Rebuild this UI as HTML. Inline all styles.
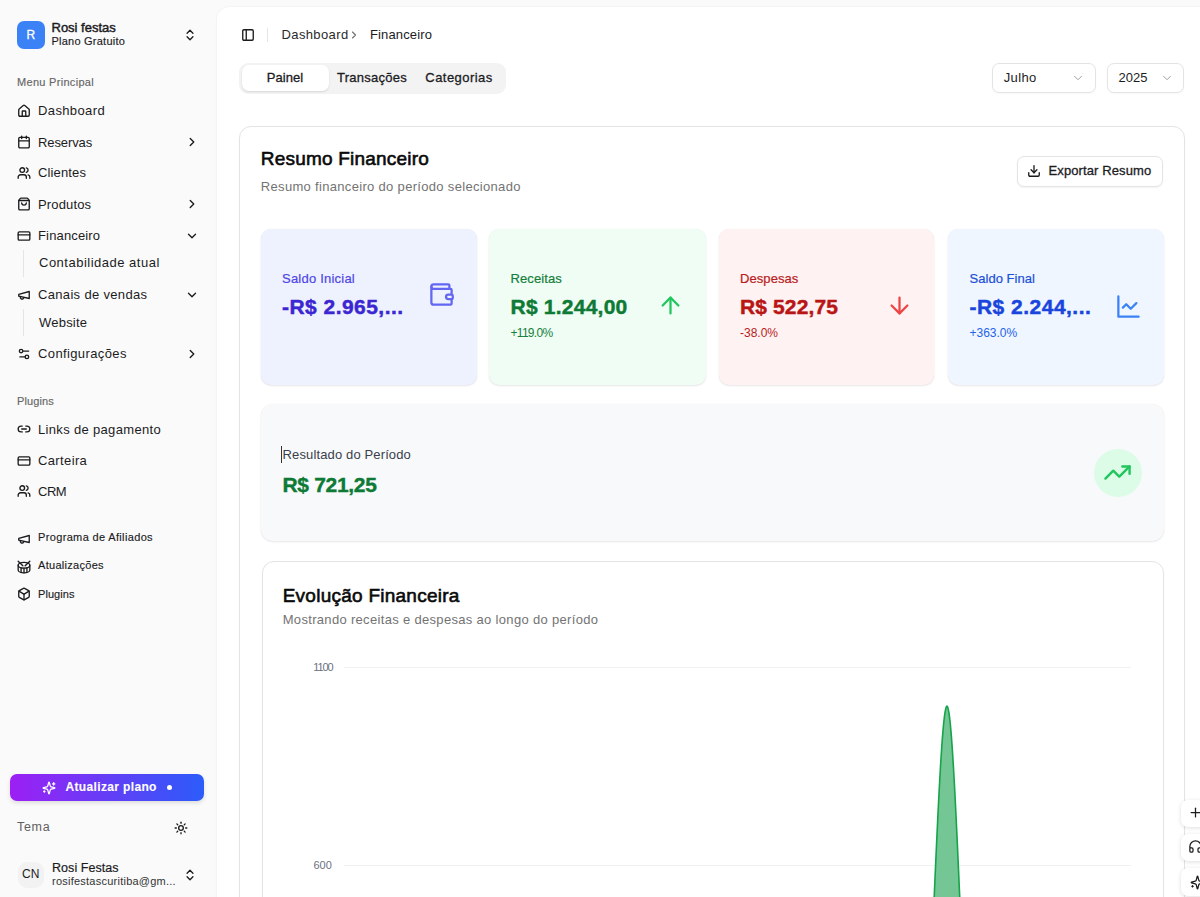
<!DOCTYPE html>
<html><head><meta charset="utf-8"><title>Financeiro</title>
<style>
html,body{margin:0;padding:0;width:1200px;height:897px;overflow:hidden;background:#fafafa;font-family:"Liberation Sans", sans-serif;}
.t{position:absolute;white-space:nowrap;line-height:1;}
.b{position:absolute;}
.i{position:absolute;overflow:visible;}
</style></head><body>
<div class="b" style="left:17px;top:21px;width:28px;height:28px;background:#3b82f6;border-radius:7px"></div>
<div class="t" style="left:26.5px;top:29.34px;font-size:12px;color:#fff;font-weight:400;letter-spacing:0px;-webkit-text-stroke:0.3px #fff;">R</div>
<div class="t" style="left:51.5px;top:21.20px;font-size:13px;color:#1c1c1e;font-weight:400;letter-spacing:0.0px;-webkit-text-stroke:0.45px #1c1c1e;">Rosi festas</div>
<div class="t" style="left:51.5px;top:35.89px;font-size:11px;color:#1c1c1e;font-weight:400;letter-spacing:0.23px;-webkit-text-stroke:0.15px #1c1c1e;">Plano Gratuito</div>
<svg class="i" style="left:183px;top:27.9px;" width="14" height="14" viewBox="0 0 24 24" fill="none" stroke="#1c1c1e" stroke-width="2.3" stroke-linecap="round" stroke-linejoin="round"><path d="m7 15 5 5 5-5"/><path d="m7 9 5-5 5 5"/></svg>
<div class="t" style="left:17.0px;top:76.99px;font-size:11px;color:#666666;font-weight:400;letter-spacing:0.3px;-webkit-text-stroke:0.15px #666666;">Menu Principal</div>
<svg class="i" style="left:17.2px;top:103.7px;" width="14" height="14" viewBox="0 0 24 24" fill="none" stroke="#1c1c1e" stroke-width="2.3" stroke-linecap="round" stroke-linejoin="round"><path d="M15 21v-8a1 1 0 0 0-1-1h-4a1 1 0 0 0-1 1v8"/><path d="M3 10a2 2 0 0 1 .709-1.528l7-5.999a2 2 0 0 1 2.582 0l7 5.999A2 2 0 0 1 21 10v9a2 2 0 0 1-2 2H5a2 2 0 0 1-2-2z"/></svg>
<div class="t" style="left:38.0px;top:104.20px;font-size:13px;color:#1c1c1e;font-weight:400;letter-spacing:0.38px;">Dashboard</div>
<svg class="i" style="left:17.2px;top:135.1px;" width="14" height="14" viewBox="0 0 24 24" fill="none" stroke="#1c1c1e" stroke-width="2.3" stroke-linecap="round" stroke-linejoin="round"><path d="M8 2v4"/><path d="M16 2v4"/><rect width="18" height="18" x="3" y="4" rx="2"/><path d="M3 10h18"/></svg>
<div class="t" style="left:38.0px;top:135.60px;font-size:13px;color:#1c1c1e;font-weight:400;letter-spacing:-0.1px;">Reservas</div>
<svg class="i" style="left:184.8px;top:134.9px;" width="14" height="14" viewBox="0 0 24 24" fill="none" stroke="#1c1c1e" stroke-width="2.3" stroke-linecap="round" stroke-linejoin="round"><path d="m9 18 6-6-6-6"/></svg>
<svg class="i" style="left:17.2px;top:165.5px;" width="14" height="14" viewBox="0 0 24 24" fill="none" stroke="#1c1c1e" stroke-width="2.3" stroke-linecap="round" stroke-linejoin="round"><path d="M16 21v-2a4 4 0 0 0-4-4H6a4 4 0 0 0-4 4v2"/><circle cx="9" cy="7" r="4"/><path d="M22 21v-2a4 4 0 0 0-3-3.87"/><path d="M16 3.13a4 4 0 0 1 0 7.75"/></svg>
<div class="t" style="left:38.0px;top:166.00px;font-size:13px;color:#1c1c1e;font-weight:400;letter-spacing:0.14px;">Clientes</div>
<svg class="i" style="left:17.2px;top:197.2px;" width="14" height="14" viewBox="0 0 24 24" fill="none" stroke="#1c1c1e" stroke-width="2.3" stroke-linecap="round" stroke-linejoin="round"><path d="M16 10a4 4 0 0 1-8 0"/><path d="M3.103 6.034h17.794"/><path d="M3.4 5.467a2 2 0 0 0-.4 1.2V20a2 2 0 0 0 2 2h14a2 2 0 0 0 2-2V6.667a2 2 0 0 0-.4-1.2l-2-2.667A2 2 0 0 0 17 2H7a2 2 0 0 0-1.6.8z"/></svg>
<div class="t" style="left:38.0px;top:197.70px;font-size:13px;color:#1c1c1e;font-weight:400;letter-spacing:0.15px;">Produtos</div>
<svg class="i" style="left:184.8px;top:197.0px;" width="14" height="14" viewBox="0 0 24 24" fill="none" stroke="#1c1c1e" stroke-width="2.3" stroke-linecap="round" stroke-linejoin="round"><path d="m9 18 6-6-6-6"/></svg>
<svg class="i" style="left:17.2px;top:228.7px;" width="14" height="14" viewBox="0 0 24 24" fill="none" stroke="#1c1c1e" stroke-width="2.3" stroke-linecap="round" stroke-linejoin="round"><rect width="20" height="14" x="2" y="5" rx="2"/><line x1="2" x2="22" y1="10" y2="10"/></svg>
<div class="t" style="left:38.0px;top:229.20px;font-size:13px;color:#1c1c1e;font-weight:400;letter-spacing:0.15px;">Financeiro</div>
<svg class="i" style="left:184.8px;top:228.5px;" width="14" height="14" viewBox="0 0 24 24" fill="none" stroke="#1c1c1e" stroke-width="2.3" stroke-linecap="round" stroke-linejoin="round"><path d="m6 9 6 6 6-6"/></svg>
<svg class="i" style="left:17.2px;top:287.9px;" width="14" height="14" viewBox="0 0 24 24" fill="none" stroke="#1c1c1e" stroke-width="2.3" stroke-linecap="round" stroke-linejoin="round"><path d="m3 11 18-5v12L3 14v-3z"/><path d="M11.6 16.8a3 3 0 1 1-5.8-1.6"/></svg>
<div class="t" style="left:38.0px;top:288.40px;font-size:13px;color:#1c1c1e;font-weight:400;letter-spacing:0.33px;">Canais de vendas</div>
<svg class="i" style="left:184.8px;top:287.7px;" width="14" height="14" viewBox="0 0 24 24" fill="none" stroke="#1c1c1e" stroke-width="2.3" stroke-linecap="round" stroke-linejoin="round"><path d="m6 9 6 6 6-6"/></svg>
<svg class="i" style="left:17.2px;top:346.8px;" width="14" height="14" viewBox="0 0 24 24" fill="none" stroke="#1c1c1e" stroke-width="2.3" stroke-linecap="round" stroke-linejoin="round"><path d="M20 7h-9"/><path d="M14 17H5"/><circle cx="17" cy="17" r="3"/><circle cx="7" cy="7" r="3"/></svg>
<div class="t" style="left:38.0px;top:347.30px;font-size:13px;color:#1c1c1e;font-weight:400;letter-spacing:0.38px;">Configurações</div>
<svg class="i" style="left:184.8px;top:346.6px;" width="14" height="14" viewBox="0 0 24 24" fill="none" stroke="#1c1c1e" stroke-width="2.3" stroke-linecap="round" stroke-linejoin="round"><path d="m9 18 6-6-6-6"/></svg>
<svg class="i" style="left:17.2px;top:422.3px;" width="14" height="14" viewBox="0 0 24 24" fill="none" stroke="#1c1c1e" stroke-width="2.3" stroke-linecap="round" stroke-linejoin="round"><path d="M9 17H7A5 5 0 0 1 7 7h2"/><path d="M15 7h2a5 5 0 1 1 0 10h-2"/><line x1="8" x2="16" y1="12" y2="12"/></svg>
<div class="t" style="left:38.0px;top:422.80px;font-size:13px;color:#1c1c1e;font-weight:400;letter-spacing:0.33px;">Links de pagamento</div>
<svg class="i" style="left:17.2px;top:453.9px;" width="14" height="14" viewBox="0 0 24 24" fill="none" stroke="#1c1c1e" stroke-width="2.3" stroke-linecap="round" stroke-linejoin="round"><rect width="20" height="14" x="2" y="5" rx="2"/><line x1="2" x2="22" y1="10" y2="10"/></svg>
<div class="t" style="left:38.0px;top:454.40px;font-size:13px;color:#1c1c1e;font-weight:400;letter-spacing:0.37px;">Carteira</div>
<svg class="i" style="left:17.2px;top:484.4px;" width="14" height="14" viewBox="0 0 24 24" fill="none" stroke="#1c1c1e" stroke-width="2.3" stroke-linecap="round" stroke-linejoin="round"><path d="M16 21v-2a4 4 0 0 0-4-4H6a4 4 0 0 0-4 4v2"/><circle cx="9" cy="7" r="4"/><path d="M22 21v-2a4 4 0 0 0-3-3.87"/><path d="M16 3.13a4 4 0 0 1 0 7.75"/></svg>
<div class="t" style="left:38.0px;top:484.90px;font-size:13px;color:#1c1c1e;font-weight:400;letter-spacing:-0.5px;">CRM</div>
<div class="b" style="left:23px;top:250px;width:1px;height:27px;background:#e5e5e5"></div>
<div class="t" style="left:39.0px;top:256.30px;font-size:13px;color:#1c1c1e;font-weight:400;letter-spacing:0.5px;">Contabilidade atual</div>
<div class="b" style="left:23px;top:308.5px;width:1px;height:27.5px;background:#e5e5e5"></div>
<div class="t" style="left:39.0px;top:316.10px;font-size:13px;color:#1c1c1e;font-weight:400;letter-spacing:0.21px;">Website</div>
<div class="t" style="left:17.0px;top:395.59px;font-size:11px;color:#666666;font-weight:400;letter-spacing:0.13px;-webkit-text-stroke:0.15px #666666;">Plugins</div>
<svg class="i" style="left:16.8px;top:532px;" width="14" height="14" viewBox="0 0 24 24" fill="none" stroke="#1c1c1e" stroke-width="2.3" stroke-linecap="round" stroke-linejoin="round"><path d="m3 11 18-5v12L3 14v-3z"/><path d="M11.6 16.8a3 3 0 1 1-5.8-1.6"/></svg>
<div class="t" style="left:38.0px;top:532.49px;font-size:11px;color:#1c1c1e;font-weight:400;letter-spacing:0.35px;-webkit-text-stroke:0.15px #1c1c1e;">Programa de Afiliados</div>
<svg class="i" style="left:17.2px;top:559.6px;" width="14" height="14" viewBox="0 0 24 24" fill="none" stroke="#1c1c1e" stroke-width="2.3" stroke-linecap="round" stroke-linejoin="round"><path d="m2 2 8 8"/><path d="m22 2-8 8"/><ellipse cx="12" cy="9" rx="10" ry="5"/><path d="M7 13.4v7.9"/><path d="M12 14v8"/><path d="M17 13.4v7.9"/><path d="M2 9v8a10 5 0 0 0 20 0V9"/></svg>
<div class="t" style="left:38.0px;top:560.39px;font-size:11px;color:#1c1c1e;font-weight:400;letter-spacing:0.29px;-webkit-text-stroke:0.15px #1c1c1e;">Atualizações</div>
<svg class="i" style="left:16.8px;top:587.2px;" width="14" height="14" viewBox="0 0 24 24" fill="none" stroke="#1c1c1e" stroke-width="2.3" stroke-linecap="round" stroke-linejoin="round"><path d="M11 21.73a2 2 0 0 0 2 0l7-4A2 2 0 0 0 21 16V8a2 2 0 0 0-1-1.73l-7-4a2 2 0 0 0-2 0l-7 4A2 2 0 0 0 3 8v8a2 2 0 0 0 1 1.73z"/><path d="M12 22V12"/><path d="m3.3 7 7.703 4.734a2 2 0 0 0 1.994 0L20.7 7"/></svg>
<div class="t" style="left:38.0px;top:588.69px;font-size:11px;color:#1c1c1e;font-weight:400;letter-spacing:0.05px;-webkit-text-stroke:0.15px #1c1c1e;">Plugins</div>
<div class="b" style="left:10px;top:774px;width:194px;height:27px;border-radius:7px;background:linear-gradient(90deg,#9d1ff4,#2b5cf9);box-shadow:0 2px 4px rgba(0,0,0,.12)"></div>
<svg class="i" style="left:42.2px;top:781.2px;" width="14" height="14" viewBox="0 0 24 24" fill="none" stroke="#fff" stroke-width="2.2" stroke-linecap="round" stroke-linejoin="round"><path d="M9.937 15.5A2 2 0 0 0 8.5 14.063l-6.135-1.582a.5.5 0 0 1 0-.962L8.5 9.936A2 2 0 0 0 9.937 8.5l1.582-6.135a.5.5 0 0 1 .963 0L14.063 8.5A2 2 0 0 0 15.5 9.937l6.135 1.581a.5.5 0 0 1 0 .964L15.5 14.063a2 2 0 0 0-1.437 1.437l-1.582 6.135a.5.5 0 0 1-.963 0z"/><path d="M20 3v4"/><path d="M22 5h-4"/><path d="M4 17v2"/><path d="M5 18H3"/></svg>
<div class="t" style="left:65.5px;top:781.34px;font-size:12px;color:#fff;font-weight:700;letter-spacing:0.35px;-webkit-text-stroke:0.1px #fff;">Atualizar plano</div>
<div class="b" style="left:167px;top:785.2px;width:5px;height:5px;border-radius:50%;background:#fff"></div>
<div class="t" style="left:17.0px;top:820.62px;font-size:12.5px;color:#5f5f5f;font-weight:400;letter-spacing:0.7px;">Tema</div>
<svg class="i" style="left:174.25px;top:820.9px;" width="14" height="14" viewBox="0 0 24 24" fill="none" stroke="#1c1c1e" stroke-width="2.3" stroke-linecap="round" stroke-linejoin="round"><circle cx="12" cy="12" r="4"/><path d="M12 2v2"/><path d="M12 20v2"/><path d="m4.93 4.93 1.41 1.41"/><path d="m17.66 17.66 1.41 1.41"/><path d="M2 12h2"/><path d="M20 12h2"/><path d="m6.34 17.66-1.41 1.41"/><path d="m19.07 4.93-1.41 1.41"/></svg>
<div class="b" style="left:17.5px;top:861.5px;width:26px;height:26.5px;border-radius:9px;background:#f2f2f2"></div>
<div class="t" style="left:22.0px;top:868.14px;font-size:12px;color:#1c1c1e;font-weight:400;letter-spacing:0px;">CN</div>
<div class="t" style="left:52.0px;top:862.22px;font-size:12.5px;color:#1c1c1e;font-weight:400;letter-spacing:0.05px;-webkit-text-stroke:0.2px #1c1c1e;">Rosi Festas</div>
<div class="t" style="left:52.0px;top:875.99px;font-size:11px;color:#333;font-weight:400;letter-spacing:0.24px;">rosifestascuritiba@gm...</div>
<svg class="i" style="left:183px;top:867.9px;" width="14" height="14" viewBox="0 0 24 24" fill="none" stroke="#1c1c1e" stroke-width="2.3" stroke-linecap="round" stroke-linejoin="round"><path d="m7 15 5 5 5-5"/><path d="m7 9 5-5 5 5"/></svg>
<div class="b" style="left:217px;top:7px;width:1000px;height:900px;background:#fff;border-radius:12px 0 0 0;box-shadow:0 0 2px rgba(0,0,0,.09)"></div>
<svg class="i" style="left:240.7px;top:27.95px;" width="14" height="14" viewBox="0 0 24 24" fill="none" stroke="#1c1c1e" stroke-width="2.3" stroke-linecap="round" stroke-linejoin="round"><rect width="18" height="18" x="3" y="3" rx="2"/><path d="M9 3v18"/></svg>
<div class="b" style="left:267px;top:28px;width:1px;height:14px;background:#e5e5e5"></div>
<div class="t" style="left:281.5px;top:28.00px;font-size:13px;color:#2a2a2a;font-weight:400;letter-spacing:0.38px;">Dashboard</div>
<svg class="i" style="left:348.3px;top:28.9px;" width="12" height="12" viewBox="0 0 24 24" fill="none" stroke="#6e6e6e" stroke-width="2.2" stroke-linecap="round" stroke-linejoin="round"><path d="m9 18 6-6-6-6"/></svg>
<div class="t" style="left:370.0px;top:28.00px;font-size:13px;color:#1c1c1e;font-weight:400;letter-spacing:0.13px;">Financeiro</div>
<div class="b" style="left:239px;top:62.5px;width:267px;height:31px;background:#f3f3f3;border-radius:9px"></div>
<div class="b" style="left:241.5px;top:65px;width:87px;height:26px;background:#fff;border-radius:7px;box-shadow:0 1px 2px rgba(0,0,0,.12)"></div>
<div class="t" style="left:266.7px;top:71.00px;font-size:13px;color:#1c1c1e;font-weight:400;letter-spacing:0.06px;-webkit-text-stroke:0.3px #1c1c1e;">Painel</div>
<div class="t" style="left:337.0px;top:71.00px;font-size:13px;color:#1c1c1e;font-weight:400;letter-spacing:0.26px;-webkit-text-stroke:0.3px #1c1c1e;">Transações</div>
<div class="t" style="left:425.3px;top:71.00px;font-size:13px;color:#1c1c1e;font-weight:400;letter-spacing:0.45px;-webkit-text-stroke:0.3px #1c1c1e;">Categorias</div>
<div class="b" style="left:992px;top:63px;width:104px;height:30.3px;border:1px solid #e4e4e7;border-radius:7px;background:#fff;box-sizing:border-box;box-shadow:0 1px 2px rgba(0,0,0,.03)"></div>
<div class="t" style="left:1003.8px;top:71.00px;font-size:13px;color:#1c1c1e;font-weight:400;letter-spacing:0.32px;">Julho</div>
<svg class="i" style="left:1070.9px;top:71.35px;" width="14" height="14" viewBox="0 0 24 24" fill="none" stroke="#9a9a9a" stroke-width="1.6" stroke-linecap="round" stroke-linejoin="round"><path d="m6 9 6 6 6-6"/></svg>
<div class="b" style="left:1106.6px;top:63px;width:77.8px;height:30.3px;border:1px solid #e4e4e7;border-radius:7px;background:#fff;box-sizing:border-box;box-shadow:0 1px 2px rgba(0,0,0,.03)"></div>
<div class="t" style="left:1118.5px;top:71.00px;font-size:13px;color:#1c1c1e;font-weight:400;letter-spacing:0px;">2025</div>
<svg class="i" style="left:1159.65px;top:71.35px;" width="14" height="14" viewBox="0 0 24 24" fill="none" stroke="#9a9a9a" stroke-width="1.6" stroke-linecap="round" stroke-linejoin="round"><path d="m6 9 6 6 6-6"/></svg>
<div class="b" style="left:239px;top:125.5px;width:945.5px;height:800px;border:1px solid #e4e4e7;border-radius:12px;background:#fff;box-sizing:border-box;box-shadow:0 1px 2px rgba(0,0,0,.04)"></div>
<div class="t" style="left:260.8px;top:149.22px;font-size:19px;color:#0a0a0a;font-weight:400;letter-spacing:0.2px;-webkit-text-stroke:0.6px #0a0a0a;">Resumo Financeiro</div>
<div class="t" style="left:260.8px;top:180.20px;font-size:13px;color:#737373;font-weight:400;letter-spacing:0.32px;">Resumo financeiro do período selecionado</div>
<div class="b" style="left:1016.5px;top:155.5px;width:146px;height:31px;border:1px solid #e4e4e7;border-radius:7px;background:#fff;box-sizing:border-box;box-shadow:0 1px 2px rgba(0,0,0,.05)"></div>
<svg class="i" style="left:1027.4px;top:163.85px;" width="14" height="14" viewBox="0 0 24 24" fill="none" stroke="#1c1c1e" stroke-width="2.3" stroke-linecap="round" stroke-linejoin="round"><path d="M21 15v4a2 2 0 0 1-2 2H5a2 2 0 0 1-2-2v-4"/><polyline points="7 10 12 15 17 10"/><line x1="12" x2="12" y1="15" y2="3"/></svg>
<div class="t" style="left:1048.6px;top:163.70px;font-size:13px;color:#1c1c1e;font-weight:400;letter-spacing:0.1px;-webkit-text-stroke:0.3px #1c1c1e;">Exportar Resumo</div>
<div class="b" style="left:260.5px;top:228.5px;width:216px;height:156px;background:#eef2ff;border-radius:10px;box-shadow:0 1px 2px rgba(0,0,0,.09),0 0 1px rgba(0,0,0,.08)"></div>
<div class="t" style="left:282.0px;top:271.60px;font-size:13px;color:#4f46e5;font-weight:400;letter-spacing:0.22px;-webkit-text-stroke:0.2px #4f46e5;">Saldo Inicial</div>
<div class="t" style="left:282.0px;top:296.22px;font-size:21px;color:#3b26d1;font-weight:700;letter-spacing:0.46px;-webkit-text-stroke:0.45px #3b26d1;">-R$ 2.965,...</div>
<svg class="i" style="left:427.5px;top:281.3px;" width="27" height="27" viewBox="0 0 24 24" fill="none" stroke="#6366f1" stroke-width="2" stroke-linecap="round" stroke-linejoin="round"><path d="M19 7V4a1 1 0 0 0-1-1H5a2 2 0 0 0 0 4h15a1 1 0 0 1 1 1v4h-3a2 2 0 0 0 0 4h3a1 1 0 0 0 1-1v-2a1 1 0 0 0-1-1"/><path d="M3 5v14a2 2 0 0 0 2 2h15a1 1 0 0 0 1-1v-4"/></svg>
<div class="b" style="left:489px;top:228.5px;width:216.5px;height:156px;background:#f0fdf4;border-radius:10px;box-shadow:0 1px 2px rgba(0,0,0,.09),0 0 1px rgba(0,0,0,.08)"></div>
<div class="t" style="left:510.5px;top:271.60px;font-size:13px;color:#15803d;font-weight:400;letter-spacing:0.1px;-webkit-text-stroke:0.2px #15803d;">Receitas</div>
<div class="t" style="left:510.5px;top:296.22px;font-size:21px;color:#0d7a35;font-weight:700;letter-spacing:0.23px;-webkit-text-stroke:0.45px #0d7a35;">R$ 1.244,00</div>
<div class="t" style="left:510.5px;top:326.84px;font-size:12px;color:#15803d;font-weight:400;letter-spacing:-0.7px;">+119.0%</div>
<svg class="i" style="left:657px;top:292.3px;" width="27" height="27" viewBox="0 0 24 24" fill="none" stroke="#22c55e" stroke-width="2" stroke-linecap="round" stroke-linejoin="round"><path d="m5 12 7-7 7 7"/><path d="M12 19V5"/></svg>
<div class="b" style="left:718.5px;top:228.5px;width:215.5px;height:156px;background:#fef2f2;border-radius:10px;box-shadow:0 1px 2px rgba(0,0,0,.09),0 0 1px rgba(0,0,0,.08)"></div>
<div class="t" style="left:740.0px;top:271.60px;font-size:13px;color:#b91c1c;font-weight:400;letter-spacing:0.07px;-webkit-text-stroke:0.2px #b91c1c;">Despesas</div>
<div class="t" style="left:740.0px;top:296.22px;font-size:21px;color:#b91515;font-weight:700;letter-spacing:0.12px;-webkit-text-stroke:0.45px #b91515;">R$ 522,75</div>
<div class="t" style="left:740.0px;top:326.84px;font-size:12px;color:#b91c1c;font-weight:400;letter-spacing:0px;">-38.0%</div>
<svg class="i" style="left:885.5px;top:292.3px;" width="27" height="27" viewBox="0 0 24 24" fill="none" stroke="#ef4444" stroke-width="2" stroke-linecap="round" stroke-linejoin="round"><path d="M12 5v14"/><path d="m19 12-7 7-7-7"/></svg>
<div class="b" style="left:948px;top:228.5px;width:215.5px;height:156px;background:#eff6ff;border-radius:10px;box-shadow:0 1px 2px rgba(0,0,0,.09),0 0 1px rgba(0,0,0,.08)"></div>
<div class="t" style="left:969.5px;top:271.60px;font-size:13px;color:#1d4ed8;font-weight:400;letter-spacing:0.03px;-webkit-text-stroke:0.2px #1d4ed8;">Saldo Final</div>
<div class="t" style="left:969.5px;top:296.22px;font-size:21px;color:#1a45dd;font-weight:700;letter-spacing:0.48px;-webkit-text-stroke:0.45px #1a45dd;">-R$ 2.244,...</div>
<div class="t" style="left:969.5px;top:326.84px;font-size:12px;color:#2563eb;font-weight:400;letter-spacing:0px;">+363.0%</div>
<svg class="i" style="left:1114.5px;top:292.5px;" width="27" height="27" viewBox="0 0 24 24" fill="none" stroke="#3b82f6" stroke-width="2" stroke-linecap="round" stroke-linejoin="round"><path d="M3 3v18h18"/><path d="m19 9-5 5-4-4-3 3"/></svg>
<div class="b" style="left:260.5px;top:404px;width:903.5px;height:136.5px;background:#f8f9fb;border-radius:12px;box-shadow:0 1px 2px rgba(0,0,0,.09),0 0 1px rgba(0,0,0,.08)"></div>
<div class="b" style="left:281px;top:446px;width:1px;height:16.5px;background:#333"></div>
<div class="t" style="left:282.6px;top:448.00px;font-size:13px;color:#3a3f4a;font-weight:400;letter-spacing:0.13px;">Resultado do Período</div>
<div class="t" style="left:282.4px;top:473.82px;font-size:21px;color:#0d7a35;font-weight:700;letter-spacing:-0.3px;-webkit-text-stroke:0.4px #0d7a35;">R$ 721,25</div>
<div class="b" style="left:1094px;top:448.5px;width:48px;height:48px;background:#dcfce7;border-radius:50%"></div>
<svg class="i" style="left:1103.2px;top:457.8px;" width="29" height="29" viewBox="0 0 24 24" fill="none" stroke="#22c55e" stroke-width="2" stroke-linecap="round" stroke-linejoin="round"><polyline points="22 7 13.5 15.5 8.5 10.5 2 17"/><polyline points="16 7 22 7 22 13"/></svg>
<div class="b" style="left:261.5px;top:561px;width:902px;height:400px;border:1px solid #e4e4e7;border-radius:12px;background:#fff;box-sizing:border-box;box-shadow:0 1px 2px rgba(0,0,0,.04)"></div>
<div class="t" style="left:282.7px;top:585.62px;font-size:19px;color:#0a0a0a;font-weight:400;letter-spacing:0.25px;-webkit-text-stroke:0.6px #0a0a0a;">Evolução Financeira</div>
<div class="t" style="left:282.7px;top:613.00px;font-size:13px;color:#737373;font-weight:400;letter-spacing:0.32px;">Mostrando receitas e despesas ao longo do período</div>
<div class="b" style="left:344px;top:667px;width:787px;height:1px;background:#f1f1f1"></div>
<div class="b" style="left:344px;top:865px;width:787px;height:1px;background:#f1f1f1"></div>
<div class="t" style="left:313.2px;top:662.19px;font-size:11px;color:#6b7280;font-weight:400;letter-spacing:-1.1px;">1100</div>
<div class="t" style="left:313.5px;top:860.19px;font-size:11px;color:#6b7280;font-weight:400;letter-spacing:0px;">600</div>
<svg class="i" style="left:0;top:0" width="1200" height="897" viewBox="0 0 1200 897"><path d="M920.75,1103.30 L921.40,1102.57 L922.06,1100.42 L922.71,1096.93 L923.37,1092.18 L924.02,1086.24 L924.68,1079.18 L925.33,1071.07 L925.99,1062.00 L926.64,1052.04 L927.30,1041.25 L927.95,1029.72 L928.61,1017.53 L929.26,1004.73 L929.92,991.42 L930.57,977.66 L931.23,963.52 L931.88,949.09 L932.54,934.43 L933.19,919.63 L933.85,904.75 L934.51,889.87 L935.16,875.07 L935.82,860.41 L936.47,845.98 L937.13,831.84 L937.78,818.08 L938.44,804.77 L939.09,791.97 L939.75,779.78 L940.40,768.25 L941.06,757.46 L941.71,747.50 L942.37,738.43 L943.02,730.32 L943.68,723.26 L944.33,717.32 L944.99,712.57 L945.64,709.08 L946.30,706.93 L946.95,706.20 L946.95,706.20 L947.61,706.93 L948.26,709.08 L948.92,712.57 L949.57,717.32 L950.23,723.26 L950.88,730.32 L951.54,738.43 L952.19,747.50 L952.85,757.46 L953.51,768.25 L954.16,779.78 L954.82,791.97 L955.47,804.77 L956.13,818.08 L956.78,831.84 L957.44,845.98 L958.09,860.41 L958.75,875.07 L959.40,889.87 L960.06,904.75 L960.71,919.63 L961.37,934.43 L962.02,949.09 L962.68,963.52 L963.33,977.66 L963.99,991.42 L964.64,1004.73 L965.30,1017.53 L965.95,1029.72 L966.61,1041.25 L967.26,1052.04 L967.92,1062.00 L968.57,1071.07 L969.23,1079.18 L969.88,1086.24 L970.54,1092.18 L971.19,1096.93 L971.85,1100.42 L972.50,1102.57 L973.16,1103.30 Z" fill="#74c794" stroke="none"/><path d="M920.75,1103.30 L921.40,1102.57 L922.06,1100.42 L922.71,1096.93 L923.37,1092.18 L924.02,1086.24 L924.68,1079.18 L925.33,1071.07 L925.99,1062.00 L926.64,1052.04 L927.30,1041.25 L927.95,1029.72 L928.61,1017.53 L929.26,1004.73 L929.92,991.42 L930.57,977.66 L931.23,963.52 L931.88,949.09 L932.54,934.43 L933.19,919.63 L933.85,904.75 L934.51,889.87 L935.16,875.07 L935.82,860.41 L936.47,845.98 L937.13,831.84 L937.78,818.08 L938.44,804.77 L939.09,791.97 L939.75,779.78 L940.40,768.25 L941.06,757.46 L941.71,747.50 L942.37,738.43 L943.02,730.32 L943.68,723.26 L944.33,717.32 L944.99,712.57 L945.64,709.08 L946.30,706.93 L946.95,706.20 L946.95,706.20 L947.61,706.93 L948.26,709.08 L948.92,712.57 L949.57,717.32 L950.23,723.26 L950.88,730.32 L951.54,738.43 L952.19,747.50 L952.85,757.46 L953.51,768.25 L954.16,779.78 L954.82,791.97 L955.47,804.77 L956.13,818.08 L956.78,831.84 L957.44,845.98 L958.09,860.41 L958.75,875.07 L959.40,889.87 L960.06,904.75 L960.71,919.63 L961.37,934.43 L962.02,949.09 L962.68,963.52 L963.33,977.66 L963.99,991.42 L964.64,1004.73 L965.30,1017.53 L965.95,1029.72 L966.61,1041.25 L967.26,1052.04 L967.92,1062.00 L968.57,1071.07 L969.23,1079.18 L969.88,1086.24 L970.54,1092.18 L971.19,1096.93 L971.85,1100.42 L972.50,1102.57 L973.16,1103.30" fill="none" stroke="#16a34a" stroke-width="1.6"/></svg>
<div class="b" style="left:1180.5px;top:799.5px;width:40px;height:27.5px;background:#fff;border-radius:7px;box-shadow:0 1px 4px rgba(0,0,0,.13)"></div>
<div class="b" style="left:1180.5px;top:833.5px;width:40px;height:27.5px;background:#fff;border-radius:7px;box-shadow:0 1px 4px rgba(0,0,0,.13)"></div>
<div class="b" style="left:1180.5px;top:868px;width:40px;height:27.5px;background:#fff;border-radius:7px;box-shadow:0 1px 4px rgba(0,0,0,.13)"></div>
<svg class="i" style="left:1188.2px;top:805.2px;" width="15" height="15" viewBox="0 0 24 24" fill="none" stroke="#1c1c1e" stroke-width="2" stroke-linecap="round" stroke-linejoin="round"><path d="M5 12h14"/><path d="M12 5v14"/></svg>
<svg class="i" style="left:1188px;top:839px;" width="15" height="15" viewBox="0 0 24 24" fill="none" stroke="#1c1c1e" stroke-width="2" stroke-linecap="round" stroke-linejoin="round"><path d="M3 14h3a2 2 0 0 1 2 2v3a2 2 0 0 1-2 2H5a2 2 0 0 1-2-2v-7a9 9 0 0 1 18 0v7a2 2 0 0 1-2 2h-1a2 2 0 0 1-2-2v-3a2 2 0 0 1 2-2h3"/></svg>
<svg class="i" style="left:1189.5px;top:874.6px;" width="15" height="15" viewBox="0 0 24 24" fill="none" stroke="#1c1c1e" stroke-width="2" stroke-linecap="round" stroke-linejoin="round"><path d="M9.937 15.5A2 2 0 0 0 8.5 14.063l-6.135-1.582a.5.5 0 0 1 0-.962L8.5 9.936A2 2 0 0 0 9.937 8.5l1.582-6.135a.5.5 0 0 1 .963 0L14.063 8.5A2 2 0 0 0 15.5 9.937l6.135 1.581a.5.5 0 0 1 0 .964L15.5 14.063a2 2 0 0 0-1.437 1.437l-1.582 6.135a.5.5 0 0 1-.963 0z"/><path d="M20 3v4"/><path d="M22 5h-4"/><path d="M4 17v2"/><path d="M5 18H3"/></svg>
</body></html>
